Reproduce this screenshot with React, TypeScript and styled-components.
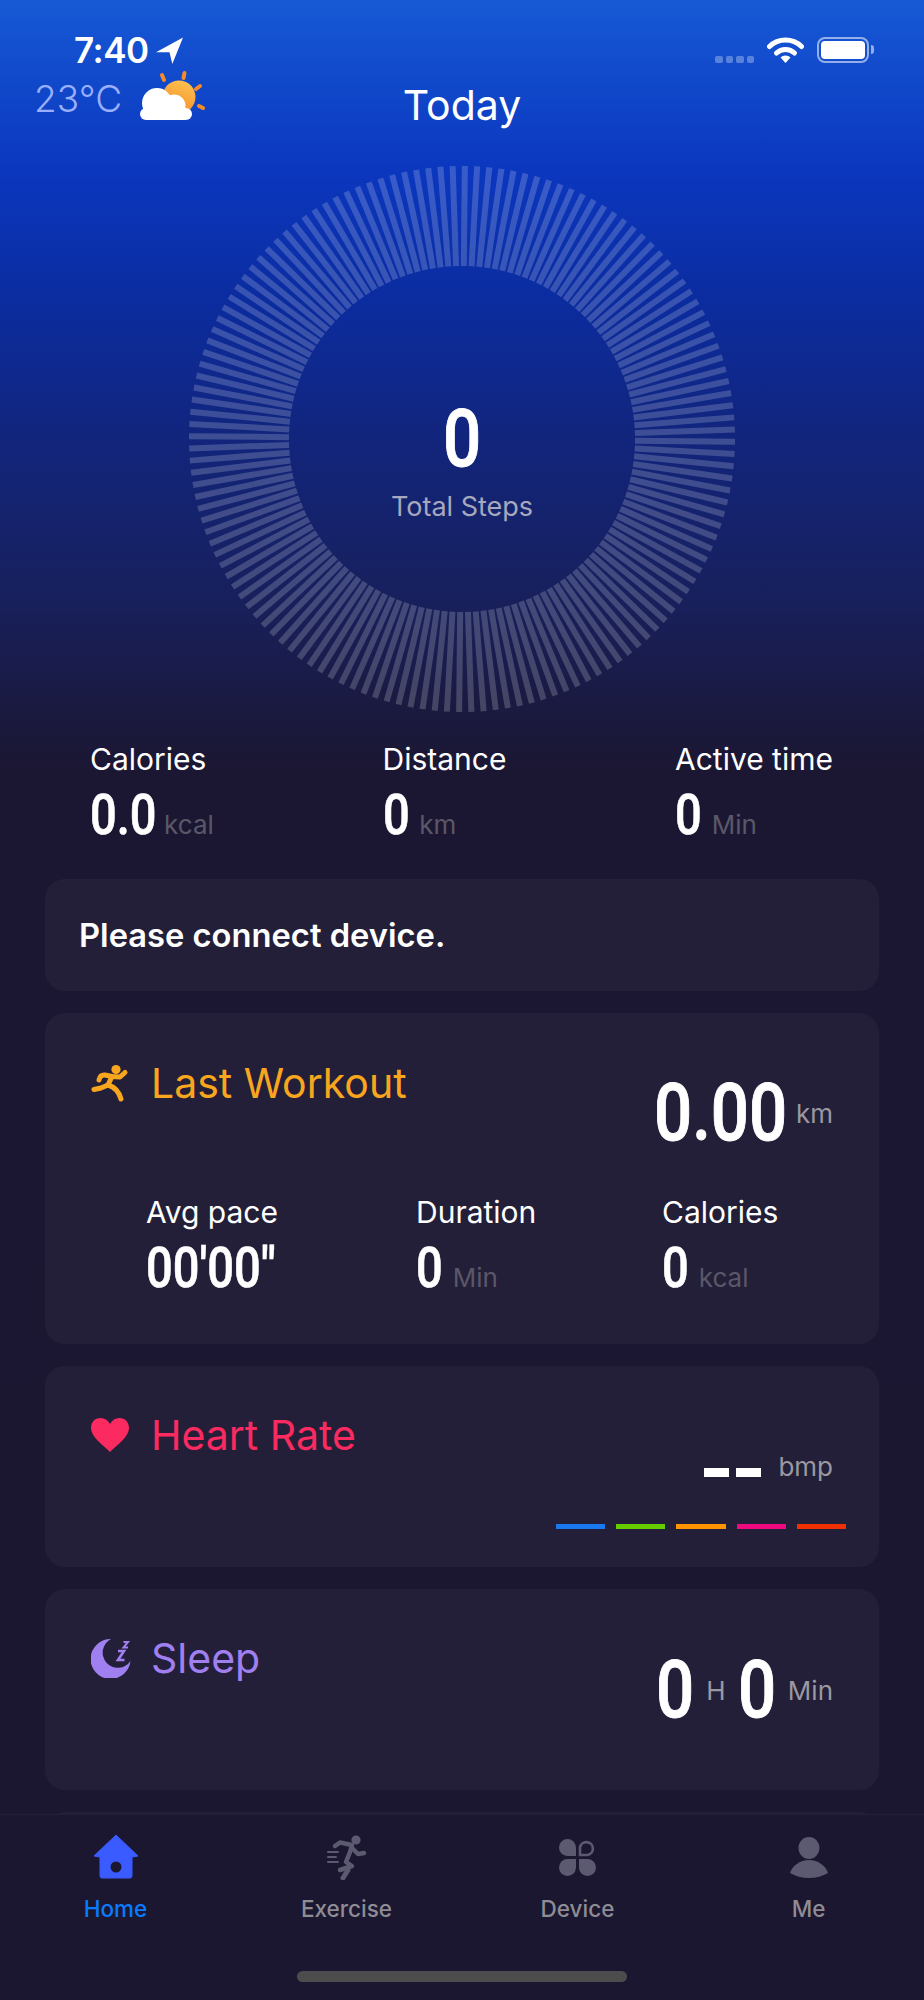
import React from "react";
import styled, { createGlobalStyle } from "styled-components";

const GlobalStyle = createGlobalStyle`
  html, body {
    margin: 0;
    padding: 0;
    background: #1b1730;
  }
  * {
    box-sizing: border-box;
  }
`;

const sans = `Inter, "Liberation Sans", sans-serif`;
const digits = `Roboto, "Liberation Sans", sans-serif`;

const BAR_COUNT = 140;
const ringBars = Array.from({ length: BAR_COUNT }, (_, i) => (i * 360) / BAR_COUNT + 0.6);

const Figure: React.FC<{ size: number; children: string }> = ({ size, children }) => (
  <FigureText $size={size} $chars={children.length}>
    {children}
  </FigureText>
);

const Stat: React.FC<{ label: string; value: string; unit?: string }> = ({ label, value, unit }) => (
  <div>
    <StatLabel>{label}</StatLabel>
    <StatValue>
      <Figure size={56}>{value}</Figure>
      {unit && <DimUnit>{unit}</DimUnit>}
    </StatValue>
  </div>
);

const App: React.FC = () => {
  return (
    <Page>
      <GlobalStyle />
      <Content>
        <StatusBar>
          <Clock>
            7:40
            <svg width="27" height="27" viewBox="0 0 24 24">
              <path d="M24 0.5 L0 13.5 L12 13.5 L14.5 24Z" fill="#fff" />
            </svg>
          </Clock>
          <StatusIcons>
            <SignalDots>
              <i />
              <i />
              <i />
              <i />
            </SignalDots>
            <svg width="37" height="26" viewBox="0 0 37 26">
              <path d="M2.5 9.5 A23 23 0 0 1 34.5 9.5" fill="none" stroke="#fff" strokeWidth="5" strokeLinecap="round" />
              <path d="M9.5 16 A13 13 0 0 1 27.5 16" fill="none" stroke="#fff" strokeWidth="5" strokeLinecap="round" />
              <path d="M13.5 20.5 A7 7 0 0 1 23.5 20.5 L18.5 26Z" fill="#fff" />
            </svg>
            <Battery>
              <BatteryFill />
            </Battery>
          </StatusIcons>
        </StatusBar>

        <Header>
          <Weather>
            <Temperature>23°C</Temperature>
            <svg width="70" height="52" viewBox="0 0 70 52">
              <defs>
                <linearGradient id="sun" x1="0.8" y1="0" x2="0.4" y2="1">
                  <stop offset="0" stopColor="#fdc452" />
                  <stop offset="1" stopColor="#f48c26" />
                </linearGradient>
              </defs>
              <circle cx="42" cy="27" r="16.5" fill="url(#sun)" />
              <g stroke="#f58a2a" strokeWidth="4" strokeLinecap="round">
                <path d="M25 5 L27 10" />
                <path d="M47.5 3 L46.5 8" />
                <path d="M63 16 L59 19" />
                <path d="M62 36 L66 38" />
              </g>
              <circle cx="20" cy="33" r="15" fill="#fff" />
              <circle cx="37" cy="36" r="11.5" fill="#fff" />
              <rect x="3" y="38" width="52" height="12" rx="6" fill="#fff" />
            </svg>
          </Weather>
          <Title>Today</Title>
        </Header>

        <RingWrap>
          <svg width="546" height="546" viewBox="-273 -273 546 546">
            {ringBars.map((angle) => (
              <line
                key={angle}
                x1="0"
                y1="-173"
                x2="0"
                y2="-273"
                stroke="#fff"
                strokeOpacity="0.19"
                strokeWidth="6"
                transform={`rotate(${angle})`}
              />
            ))}
          </svg>
          <RingCenter>
            <Figure size={80}>0</Figure>
            <RingLabel>Total Steps</RingLabel>
          </RingCenter>
        </RingWrap>

        <StatsRow>
          <Stat label="Calories" value="0.0" unit="kcal" />
          <Stat label="Distance" value="0" unit="km" />
          <Stat label="Active time" value="0" unit="Min" />
        </StatsRow>

        <Cards>
          <NoticeCard>Please connect device.</NoticeCard>

          <Card $height={331} $top={55}>
            <CardHead>
              <CardTitle $color="#f9a61f">
                <IconSlot>
                  <svg width="38" height="38" viewBox="0 0 38 38" fill="none" stroke="#f9a61f" strokeWidth="5" strokeLinecap="round" strokeLinejoin="round">
                    <circle cx="25" cy="5.5" r="4.6" fill="#f9a61f" stroke="none" />
                    <path d="M8 16 Q9 10.5 14 11 L21 12.5 L29 13 L34 8.5" />
                    <path d="M21 12.5 L17 21" />
                    <path d="M17 21 L10 24 L3 25.5" />
                    <path d="M17 21 Q27 24 30 35" />
                  </svg>
                </IconSlot>
                Last Workout
              </CardTitle>
              <BigValue $top={17}>
                <Figure size={80}>0.00</Figure>
                <GreyUnit>km</GreyUnit>
              </BigValue>
            </CardHead>
            <WorkoutStats>
              <Stat label="Avg pace" value={`00'00"`} />
              <Stat label="Duration" value="0" unit="Min" />
              <Stat label="Calories" value="0" unit="kcal" />
            </WorkoutStats>
          </Card>

          <Card $height={201} $top={54}>
            <CardHead>
              <CardTitle $color="#fb2a60">
                <IconSlot>
                  <svg width="38" height="34" viewBox="0 0 38 34">
                    <path
                      d="M19 34 C12 27 0 19 0 10 C0 4 4 0 9.5 0 C13.5 0 17 2 19 6 C21 2 24.5 0 28.5 0 C34 0 38 4 38 10 C38 19 26 27 19 34Z"
                      fill="#fb2a60"
                    />
                  </svg>
                </IconSlot>
                Heart Rate
              </CardTitle>
              <HeartValue>
                <Dashes>
                  <i />
                  <i />
                </Dashes>
                <GreyUnit>bmp</GreyUnit>
              </HeartValue>
            </CardHead>
            <Zones>
              {["#1a78f0", "#66cc00", "#ff9400", "#f0087f", "#f03000"].map((c) => (
                <Zone key={c} $color={c} />
              ))}
            </Zones>
          </Card>

          <Card $height={201} $top={54}>
            <CardHead>
              <CardTitle $color="#a07ff0">
                <IconSlot>
                  <svg width="40" height="40" viewBox="0 0 40 40">
                    <path d="M20 1 A20 20 0 1 0 39.5 23 A15.2 15.2 0 1 1 20 1Z" fill="#a07ff0" />
                    <path d="M27 13 L33 13 L27 22 L33.5 22" fill="none" stroke="#a07ff0" strokeWidth="2.6" />
                    <path d="M32.5 4 L37 4 L32.5 9.5 L37 9.5" fill="none" stroke="#a07ff0" strokeWidth="2" />
                  </svg>
                </IconSlot>
                Sleep
              </CardTitle>
              <BigValue $top={19}>
                <Figure size={80}>0</Figure>
                <GreyUnit>H</GreyUnit>
                <Figure size={80}>0</Figure>
                <GreyUnit>Min</GreyUnit>
              </BigValue>
            </CardHead>
          </Card>

          <Card $height={201} $top={54} />
        </Cards>
      </Content>

      <TabBar>
        <Tab $active>
          <TabIcon>
            <svg width="44" height="44" viewBox="0 0 44 44">
              <path
                d="M22 0 L44 21 L38 22 L38 41 Q38 43 36 43 L8 43 Q6 43 6 41 L6 22 L0 21Z"
                fill="#3a5bff"
                stroke="#3a5bff"
                strokeWidth="1"
                strokeLinejoin="round"
              />
              <circle cx="22" cy="32" r="5.5" fill="#1b1730" />
            </svg>
          </TabIcon>
          Home
        </Tab>
        <Tab>
          <TabIcon>
            <svg width="42" height="46" viewBox="0 0 42 46" fill="none" stroke="#5b5a70" strokeWidth="4.5" strokeLinecap="round" strokeLinejoin="round">
              <circle cx="30" cy="6" r="4.6" fill="#5b5a70" stroke="none" />
              <path d="M9 12 L14 8.5 L26 11 L24 18 L20 28 L26 32 L14 36" />
              <path d="M26 14 L32 20 L38 19" />
              <path d="M22 36 L17 44" strokeWidth="5" />
              <g strokeWidth="2">
                <path d="M2 18 L12 18" />
                <path d="M2 23 L10 23" />
                <path d="M2 28 L12 28" />
              </g>
            </svg>
          </TabIcon>
          Exercise
        </Tab>
        <Tab>
          <TabIcon>
            <svg width="37" height="37" viewBox="0 0 37 37" fill="#5b5a70">
              <path d="M17 17 L17 8.5 A8.5 8.5 0 1 0 8.5 17Z" />
              <path d="M21 16 L21 8.5 A6.5 6.5 0 1 1 28.5 16Z" fill="none" stroke="#5b5a70" strokeWidth="2.6" />
              <path d="M17 20 L17 28.5 A8.5 8.5 0 1 1 8.5 20Z" />
              <path d="M20 20 L20 28.5 A8.5 8.5 0 1 0 28.5 20Z" />
            </svg>
          </TabIcon>
          Device
        </Tab>
        <Tab>
          <TabIcon>
            <svg width="38" height="41" viewBox="0 0 38 41" fill="#5b5a70">
              <ellipse cx="19" cy="11" rx="10.5" ry="11" />
              <path d="M19 23 C28 23 36 29 38 36 C33 39 26 41 19 41 C12 41 5 39 0 36 C2 29 10 23 19 23Z" />
            </svg>
          </TabIcon>
          Me
        </Tab>
      </TabBar>
      <HomeIndicator />
    </Page>
  );
};

const Page = styled.div`
  position: relative;
  width: 924px;
  height: 2000px;
  display: flex;
  flex-direction: column;
  overflow: hidden;
  font-family: ${sans};
  color: #fff;
  background: linear-gradient(
    180deg,
    #1659d5 0px,
    #0b37bf 170px,
    #0b2c9f 300px,
    #12257c 440px,
    #18205c 600px,
    #1a1a42 700px,
    #1b1733 770px,
    #1b1730 2000px
  );
`;
const Content = styled.div`
  flex: 1;
  min-height: 0;
  overflow: hidden;
`;
const StatusBar = styled.div`
  height: 63px;
  padding: 37px 55px 0 74px;
  display: flex;
  justify-content: space-between;
  align-items: flex-start;
`;
const Clock = styled.div`
  display: flex;
  align-items: center;
  gap: 7px;
  height: 26px;
  font-size: 35px;
  font-weight: 600;
  letter-spacing: -0.5px;
`;
const StatusIcons = styled.div`
  display: flex;
  align-items: flex-start;
  gap: 13px;
`;
const SignalDots = styled.div`
  display: flex;
  gap: 3px;
  margin-top: 19px;
  & i {
    width: 7.5px;
    height: 7px;
    border-radius: 2px;
    background: rgba(255, 255, 255, 0.3);
  }
`;
const Battery = styled.div`
  position: relative;
  width: 52px;
  height: 26px;
  padding: 2px;
  border: 2px solid rgba(255, 255, 255, 0.55);
  border-radius: 8px;
  &::after {
    content: "";
    position: absolute;
    right: -7px;
    top: 6px;
    width: 3px;
    height: 9px;
    border-radius: 0 3px 3px 0;
    background: rgba(255, 255, 255, 0.55);
  }
`;
const BatteryFill = styled.div`
  width: 100%;
  height: 100%;
  border-radius: 4px;
  background: #fff;
`;
const Header = styled.div`
  position: relative;
  height: 103px;
  display: flex;
  justify-content: center;
  padding-top: 17px;
`;
const Weather = styled.div`
  position: absolute;
  left: 34px;
  top: 7px;
  display: flex;
  align-items: center;
  gap: 15px;
`;
const Temperature = styled.div`
  font-size: 37px;
  font-weight: 300;
  color: #9ab0ff;
  margin-top: 4px;
`;
const Title = styled.div`
  font-size: 41px;
  line-height: 50px;
  font-weight: 400;
`;
const RingWrap = styled.div`
  position: relative;
  width: 546px;
  height: 546px;
  margin: 0 auto;
  & > svg {
    display: block;
  }
`;
const RingCenter = styled.div`
  position: absolute;
  inset: 245px 0 auto 0;
  display: flex;
  flex-direction: column;
  align-items: center;
`;
const RingLabel = styled.div`
  margin-top: 22px;
  font-size: 27px;
  line-height: 32px;
  color: #a7a8bd;
`;
const FigureText = styled.span<{ $size: number; $chars: number }>`
  display: inline-block;
  font-family: ${digits};
  font-weight: 500;
  font-size: ${(p) => p.$size}px;
  line-height: 0.72em;
  color: #fff;
  -webkit-text-stroke: 0.012em #fff;
  transform: scaleX(0.84);
  transform-origin: left center;
  margin-right: ${(p) => -0.09 * p.$chars}em;
`;
const StatsRow = styled.div`
  display: grid;
  grid-template-columns: repeat(3, 292.5px);
  padding: 36px 0 0 90px;
`;
const StatLabel = styled.div`
  font-size: 30px;
  line-height: 22px;
  margin-bottom: 25px;
  white-space: nowrap;
`;
const StatValue = styled.div`
  display: flex;
  align-items: baseline;
  gap: 10px;
`;
const DimUnit = styled.span`
  font-size: 26px;
  line-height: 20px;
  color: #5a5768;
`;
const GreyUnit = styled.span`
  font-size: 26px;
  line-height: 20px;
  color: #9a98a0;
`;
const Cards = styled.div`
  display: flex;
  flex-direction: column;
  gap: 22px;
  margin-top: 44px;
  padding: 0 45px;
`;
const Card = styled.div<{ $height: number; $top: number }>`
  flex: none;
  height: ${(p) => p.$height}px;
  padding: ${(p) => p.$top}px 46px 0;
  border-radius: 20px;
  background: #241f38;
`;
const NoticeCard = styled.div`
  flex: none;
  height: 112px;
  padding-left: 34px;
  display: flex;
  align-items: center;
  border-radius: 20px;
  background: #241f38;
  font-size: 32.7px;
  font-weight: 600;
`;
const CardHead = styled.div`
  display: flex;
  justify-content: space-between;
  align-items: flex-start;
`;
const CardTitle = styled.div<{ $color: string }>`
  display: flex;
  align-items: center;
  gap: 20px;
  height: 30px;
  font-size: 41px;
  color: ${(p) => p.$color};
  white-space: nowrap;
`;
const IconSlot = styled.span`
  flex: none;
  width: 40px;
  display: flex;
  align-items: center;
  & svg {
    display: block;
  }
`;
const BigValue = styled.div<{ $top: number }>`
  display: flex;
  align-items: center;
  gap: 12px;
  margin-top: ${(p) => p.$top}px;
`;
const WorkoutStats = styled.div`
  display: grid;
  grid-template-columns: 270px 246px 1fr;
  margin-top: 58px;
  padding-left: 55px;
`;
const HeartValue = styled.div`
  display: flex;
  align-items: flex-end;
  gap: 17px;
  margin-top: 37px;
`;
const Dashes = styled.div`
  display: flex;
  gap: 7px;
  & i {
    width: 25px;
    height: 9px;
    background: #fff;
  }
`;
const Zones = styled.div`
  display: flex;
  justify-content: flex-end;
  gap: 11px;
  margin: 47px -13px 0 0;
`;
const Zone = styled.div<{ $color: string }>`
  width: 49.2px;
  height: 5px;
  background: ${(p) => p.$color};
`;
const TabBar = styled.div`
  flex: none;
  height: 186px;
  display: grid;
  grid-template-columns: repeat(4, 1fr);
  align-items: start;
  border-top: 1px solid #241f38;
  background: #1b1730;
`;
const Tab = styled.div<{ $active?: boolean }>`
  display: flex;
  flex-direction: column;
  align-items: center;
  padding-top: 19px;
  font-size: 22.5px;
  line-height: 26px;
  font-weight: 500;
  color: ${(p) => (p.$active ? "#0a7aff" : "#8e8c94")};
`;
const TabIcon = styled.span`
  height: 46px;
  margin-bottom: 16px;
  display: flex;
  align-items: center;
  justify-content: center;
  & svg {
    display: block;
  }
`;
const HomeIndicator = styled.div`
  position: absolute;
  left: 297px;
  bottom: 18px;
  width: 330px;
  height: 11px;
  border-radius: 6px;
  background: #4c4c4c;
`;

export default App;
